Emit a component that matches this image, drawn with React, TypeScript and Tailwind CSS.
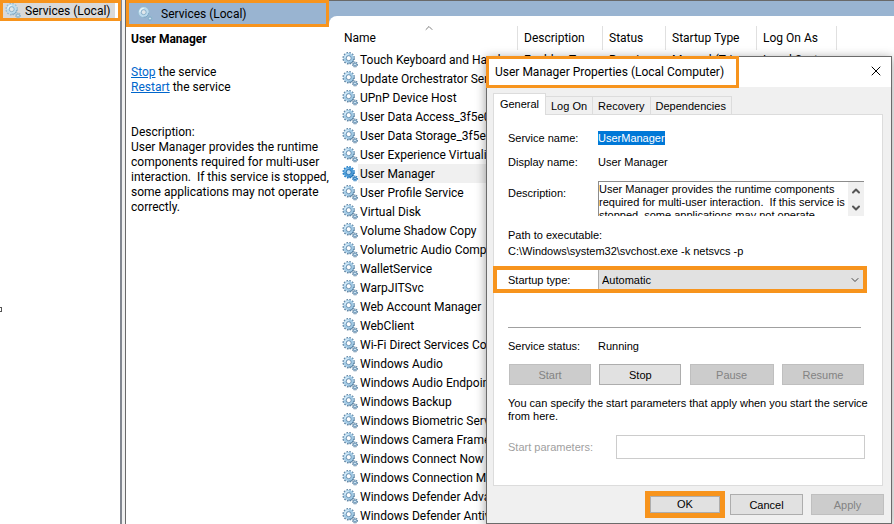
import { useState } from "react";
import { ChevronDown, ChevronUp, X } from "lucide-react";
import clsx from "clsx";

const SERVICES = [
  "Touch Keyboard and Hand...",
  "Update Orchestrator Service",
  "UPnP Device Host",
  "User Data Access_3f5e0",
  "User Data Storage_3f5e0",
  "User Experience Virtualizati...",
  "User Manager",
  "User Profile Service",
  "Virtual Disk",
  "Volume Shadow Copy",
  "Volumetric Audio Composit...",
  "WalletService",
  "WarpJITSvc",
  "Web Account Manager",
  "WebClient",
  "Wi-Fi Direct Services Conne...",
  "Windows Audio",
  "Windows Audio Endpoint B...",
  "Windows Backup",
  "Windows Biometric Service",
  "Windows Camera Frame Se...",
  "Windows Connect Now - C...",
  "Windows Connection Mana...",
  "Windows Defender Advanc...",
  "Windows Defender Antiviru...",
];

const COLUMNS = [
  { label: "Description", width: "w-[85px]" },
  { label: "Status", width: "w-[63px]" },
  { label: "Startup Type", width: "w-[91px]" },
  { label: "Log On As", width: "w-[80px]" },
];

const FIRST_ROW = ["Enables Tou...", "Running", "Manual (Trig...", "Local Syste..."];

const TABS = ["General", "Log On", "Recovery", "Dependencies"];

const DESCRIPTION =
  "User Manager provides the runtime components required for multi-user interaction.  If this service is stopped, some applications may not operate correctly.";

const GEAR_COLORS = {
  normal: { edge: "#6388a6", rim: "#5580a3", body: "#a3cbe6", shine: "#d6ecf9", hole: "#ffffff" },
  selected: { edge: "#2a7fc4", rim: "#1a68aa", body: "#4a9bd8", shine: "#7dbbe8", hole: "#c4e0f5" },
  pale: { edge: "#94b9d0", rim: "#7aa5c2", body: "#bddcee", shine: "#e8f5fb", hole: "#dfe6ea" },
};

function GearIcon({ tone = "normal" }: { tone?: keyof typeof GEAR_COLORS }) {
  const c = GEAR_COLORS[tone];
  return (
    <svg viewBox="0 0 16 16" className="size-4 shrink-0" aria-hidden="true">
      <circle cx="6.7" cy="6.2" r="5.4" fill="none" stroke={c.edge} strokeWidth="1.8" strokeDasharray="1.6 1.22" />
      <circle cx="6.7" cy="6.2" r="3.8" fill={c.hole} stroke={c.body} strokeWidth="2.6" />
      <path d="M2.9 6.2a3.8 3.8 0 0 1 3.8-3.8" fill="none" stroke={c.shine} strokeWidth="1.4" />
      <path d="M11.6 6.8a5 5 0 0 1-5.2 4.4" fill="none" stroke={c.rim} strokeWidth="0.9" />
      <circle cx="6.7" cy="6.2" r="2.5" fill="none" stroke={c.rim} strokeWidth="0.8" />
      <circle cx="13" cy="12.5" r="2.4" fill="none" stroke={c.edge} strokeWidth="1.2" strokeDasharray="1.1 0.78" />
      <circle cx="13" cy="12.5" r="1.6" fill={c.body} stroke={c.rim} strokeWidth="0.8" />
      <circle cx="13" cy="12.5" r="0.6" fill={c.hole} />
    </svg>
  );
}

function ConsoleTree() {
  return (
    <nav className="relative w-[122px] shrink-0 border-r-2 border-[#828790] bg-white">
      <div className="-mr-px flex h-[21px] border-3 border-[#f7941d]">
        <a href="#services" className="flex items-center gap-1 bg-[#d9d9d9] pr-1 pl-0.5">
          <GearIcon tone="pale" />
          <span className="whitespace-nowrap">Services (Local)</span>
        </a>
      </div>
      <span className="absolute top-[307px] left-0 h-[5px] w-[2px] border border-l-0 border-[#555]" />
    </nav>
  );
}

function DetailPane() {
  return (
    <section className="w-[203px] shrink-0">
      <h1 className="flex h-[27px] items-center gap-2 border-3 border-[#f7941d] bg-[#99b4d1] pl-2">
        <GearIcon tone="pale" />
        Services (Local)
      </h1>
      <div className="pt-[5px] pl-[5px] leading-[15px]">
        <h2 className="font-bold">User Manager</h2>
        <p className="mt-[18px]">
          <a href="#stop" className="text-[#0066cc] underline">Stop</a> the service
        </p>
        <p>
          <a href="#restart" className="text-[#0066cc] underline">Restart</a> the service
        </p>
        <p className="mt-[30px]">Description:</p>
        <p className="whitespace-pre-wrap">{DESCRIPTION}</p>
      </div>
    </section>
  );
}

function ServiceList() {
  return (
    <section className="min-w-0 flex-1 border-t border-[#696969] bg-[#99b4d1] pt-[15px]">
      <div className="h-full overflow-hidden rounded-tl-lg bg-white">
        <table className="w-full table-fixed border-collapse whitespace-nowrap">
          <thead>
            <tr className="h-[34px] text-left align-bottom">
              <th className="relative w-[188px] p-0 pl-[15px] font-normal">
                <span className="flex h-6 items-center">Name</span>
                <ChevronUp className="absolute top-[6px] left-[94px] size-3 text-[#555]" strokeWidth={1.5} />
              </th>
              {COLUMNS.map((col) => (
                <th key={col.label} className={clsx("p-0 font-normal", col.width)}>
                  <span className="flex h-6 items-center border-l border-[#e0e0e0] pl-[6px]">{col.label}</span>
                </th>
              ))}
              <th className="p-0">
                <span className="block h-6 border-l border-[#e0e0e0]" />
              </th>
            </tr>
          </thead>
          <tbody>
            {SERVICES.map((name, i) => (
              <tr key={name} className="h-[19px]">
                <td className="p-0">
                  <div className="flex h-[19px] items-center pl-[13px]">
                    <GearIcon tone={name === "User Manager" ? "selected" : "normal"} />
                    <span
                      className={clsx("flex-1 pt-[2px] pl-[2px] leading-[17px]", name === "User Manager" && "bg-[#f0f0f0]")}
                    >
                      {name}
                    </span>
                  </div>
                </td>
                {COLUMNS.map((col, c) => (
                  <td key={col.label} className="p-0 pl-[7px]">
                    {i === 0 && FIRST_ROW[c]}
                  </td>
                ))}
                <td />
              </tr>
            ))}
          </tbody>
        </table>
      </div>
    </section>
  );
}

function DialogButton({ label, disabled, className }: { label: string; disabled?: boolean; className?: string }) {
  return (
    <button
      type="button"
      disabled={disabled}
      className={clsx(
        "border",
        disabled ? "border-[#bfbfbf] bg-[#cccccc] text-[#838383]" : "border-[#adadad] bg-[#e1e1e1]",
        className
      )}
    >
      {label}
    </button>
  );
}

function GeneralTab() {
  const [startup, setStartup] = useState("Automatic");

  return (
    <div className="h-[372px] border border-[#dcdcdc] bg-white">
      <div className="grid grid-cols-[90px_1fr] items-center pt-[15px] pr-[18px] pl-[14px]">
        <label htmlFor="service-name">Service name:</label>
        <input
          id="service-name"
          readOnly
          value="UserManager"
          className="field-sizing-content h-[14px] justify-self-start bg-[#0078d7] text-white outline-none"
        />
        <label htmlFor="display-name" className="mt-2">Display name:</label>
        <input id="display-name" readOnly value="User Manager" className="mt-2 h-4 outline-none" />
        <label htmlFor="description">Description:</label>
        <div className="mt-[11px] flex h-[35px] border-t border-l border-[#8c8c8c]">
          <textarea
            id="description"
            readOnly
            value={DESCRIPTION}
            className="min-w-0 flex-1 resize-none overflow-hidden pt-px leading-[13px] outline-none"
          />
          <div className="flex w-4 flex-col items-center justify-around bg-[#f0f0f0] text-[#555]">
            <button type="button" aria-label="Scroll up">
              <ChevronUp className="size-3" strokeWidth={4} />
            </button>
            <button type="button" aria-label="Scroll down">
              <ChevronDown className="size-3" strokeWidth={4} />
            </button>
          </div>
        </div>
      </div>

      <div className="mt-[11px] pl-[14px] leading-4">
        <p>Path to executable:</p>
        <p>C:\Windows\system32\svchost.exe -k netsvcs -p</p>
      </div>

      <div className="mt-[7px] mr-[15px] -ml-px flex h-[27px] items-center border-4 border-[#f7941d] pl-[11px]">
        <label htmlFor="startup" className="w-[90px]">Startup type:</label>
        <div className="relative h-full flex-1">
          <select
            id="startup"
            value={startup}
            onChange={(e) => setStartup(e.target.value)}
            className="h-full w-full appearance-none border-l border-[#adadad] bg-[#e1e1e1] pl-[3px] outline-none"
          >
            <option>Automatic</option>
            <option>Manual</option>
            <option>Disabled</option>
          </select>
          <ChevronDown className="pointer-events-none absolute top-1 right-[2px] size-3 text-[#444]" strokeWidth={2} />
        </div>
      </div>

      <hr className="mt-[34px] mr-[21px] ml-[14px] border-[#a0a0a0]" />

      <div className="mt-[11px] grid grid-cols-[90px_1fr] pl-[14px] leading-[14px]">
        <span>Service status:</span>
        <span>Running</span>
      </div>
      <div className="mt-[11px] mr-[18px] ml-[15px] flex justify-between">
        <DialogButton label="Start" disabled className="h-[21px] w-[82px]" />
        <DialogButton label="Stop" className="h-[21px] w-[82px]" />
        <DialogButton label="Pause" disabled className="h-[21px] w-[84px]" />
        <DialogButton label="Resume" disabled className="h-[21px] w-[82px]" />
      </div>
      <p className="mt-3 pr-1 pl-[14px] leading-[13px]">
        You can specify the start parameters that apply when you start the service
        <br />
        from here.
      </p>
      <div className="mt-3 mr-[17px] ml-[14px] flex items-center">
        <label htmlFor="params" className="w-[108px] text-[#a0a0a0]">Start parameters:</label>
        <input id="params" disabled className="h-6 min-w-0 flex-1 border border-[#cccccc] px-1" />
      </div>
    </div>
  );
}

function PropertiesDialog() {
  const [tab, setTab] = useState("General");

  return (
    <div
      role="dialog"
      aria-labelledby="dialog-title"
      className="absolute top-14 right-[2px] w-[406px] border border-[#6b6b6b] bg-[#f0f0f0] font-['Liberation_Sans',sans-serif] text-[11px] shadow-[0_2px_10px_rgba(0,0,0,0.4)]"
    >
      <header className="flex h-[30px] items-start justify-between bg-white font-[Roboto,sans-serif] text-[12px]">
        <h2
          id="dialog-title"
          className="-mt-px -ml-px flex h-8 w-[253px] items-center border-3 border-[#f7941d] bg-white pl-[6px] whitespace-nowrap"
        >
          User Manager Properties (Local Computer)
        </h2>
        <button type="button" aria-label="Close" className="mt-[6px] mr-[7px]">
          <X className="size-4" strokeWidth={1.5} />
        </button>
      </header>

      <div className="px-[6px] pt-[6px]">
        <div role="tablist" className="flex items-end">
          {TABS.map((name) => (
            <button
              key={name}
              type="button"
              role="tab"
              aria-selected={tab === name}
              onClick={() => setTab(name)}
              className={clsx(
                "border-[#dcdcdc]",
                tab === name
                  ? "relative -mb-px h-[22px] w-[53px] border-x border-t bg-white pb-[2px]"
                  : "h-[18px] border-t border-r px-[5px]"
              )}
            >
              {name}
            </button>
          ))}
        </div>
        <div className="mr-[2px]">
          <GeneralTab />
        </div>
      </div>

      <footer className="flex h-[37px] items-center justify-end pr-[7px]">
        <div className="mr-[5px] border-[5px] border-[#f7941d]">
          <DialogButton label="OK" className="block h-[17px] w-[70px] leading-none" />
        </div>
        <DialogButton label="Cancel" className="mr-2 h-[21px] w-[73px]" />
        <DialogButton label="Apply" disabled className="h-[21px] w-[73px]" />
      </footer>
    </div>
  );
}

export default function App() {
  return (
    <main className="relative flex h-screen overflow-hidden bg-white font-[Roboto,sans-serif] text-[12px] leading-4 text-black">
      <ConsoleTree />
      <div className="w-1 shrink-0 border-r border-[#696969] bg-[#f0f0f0]" />
      <DetailPane />
      <ServiceList />
      <PropertiesDialog />
    </main>
  );
}
